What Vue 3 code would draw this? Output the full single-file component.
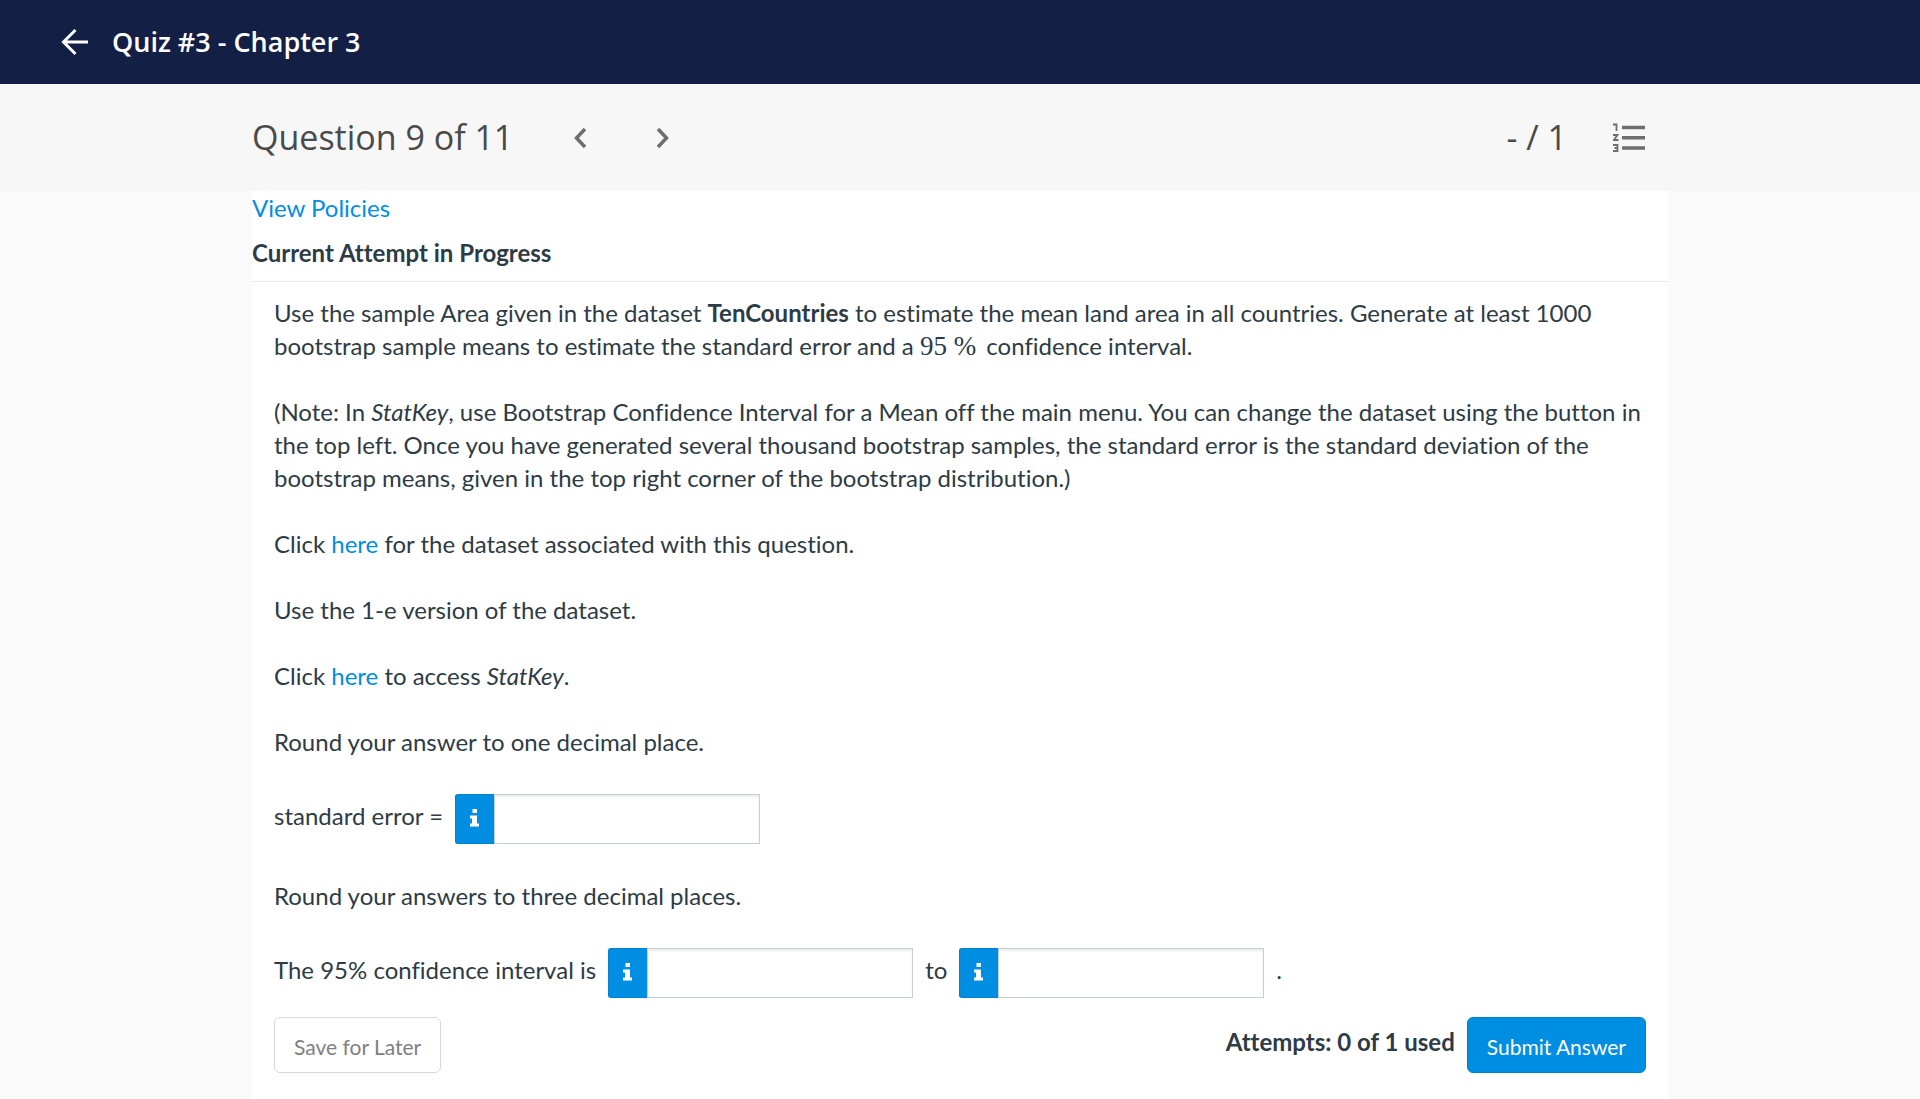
<script setup>
import { ref } from 'vue'

const standardError = ref('')
const lower = ref('')
const upper = ref('')
</script>

<template>
  <div class="page">
    <header class="topbar">
      <button class="icon-button back" type="button" aria-label="Back">
        <svg width="28" height="28" viewBox="0 0 28 28" fill="none" stroke="#fff" stroke-width="3">
          <path d="M15.500 2 L3.500 14 L15.500 26 M3.500 14 H28" />
        </svg>
      </button>
      <h1>Quiz #3 - Chapter 3</h1>
    </header>

    <nav class="toolbar">
      <div class="toolbar-inner">
        <h2>Question 9 of 11</h2>
        <button class="icon-button prev" type="button" aria-label="Previous question">
          <svg width="14" height="22" viewBox="0 0 14 22" fill="none" stroke="#6e6e6e" stroke-width="3.500">
            <path d="M12 2 L3.500 11 L12 20" />
          </svg>
        </button>
        <button class="icon-button next" type="button" aria-label="Next question">
          <svg width="14" height="22" viewBox="0 0 14 22" fill="none" stroke="#6e6e6e" stroke-width="3.500">
            <path d="M2 2 L10.500 11 L2 20" />
          </svg>
        </button>
        <span class="score">- / 1</span>
        <button class="icon-button list" type="button" aria-label="Question list">
          <svg width="32" height="29" viewBox="0 0 32 29" fill="none" stroke="#6e6e6e">
            <path stroke-width="3.600" d="M9 4.500 H32 M9 14.700 H32 M9 25 H32" />
            <path stroke-width="1.800" d="M0 1.500 H3.500 V8 M0 12 H4.500 L1 17 H5.500 M0 22 H4.500 V28 H0 M1.500 25 H4.500" />
          </svg>
        </button>
      </div>
    </nav>

    <main class="card">
      <div class="card-head">
        <a href="#">View Policies</a>
        <h3>Current Attempt in Progress</h3>
      </div>

      <div class="question">
        <p>
          Use the sample Area given in the dataset <strong>TenCountries</strong> to estimate the mean land
          area in all countries. Generate at least 1000 bootstrap sample means to estimate the standard
          error and a <span class="math">95&nbsp;%</span> confidence interval.
        </p>
        <p>
          (Note: In <em>StatKey</em>, use Bootstrap Confidence Interval for a Mean off the main menu. You can
          change the dataset using the button in the top left. Once you have generated several thousand
          bootstrap samples, the standard error is the standard deviation of the bootstrap means, given in
          the top right corner of the bootstrap distribution.)
        </p>
        <p>Click <a href="#">here</a> for the dataset associated with this question.</p>
        <p>Use the 1-e version of the dataset.</p>
        <p>Click <a href="#">here</a> to access <em>StatKey</em>.</p>
        <p>Round your answer to one decimal place.</p>

        <div class="answer">
          <label for="se">standard error =</label>
          <div class="field">
            <button class="info" type="button" aria-label="Answer information">
              <svg width="10" height="18" viewBox="0 0 10 18" fill="#fff">
                <path d="M2.500 0 H7 V4 H2.500 Z M0 6.500 H7 V14.500 H9 V17.500 H0 V14.500 H2 V9.500 H0 Z" />
              </svg>
            </button>
            <input id="se" v-model="standardError" type="text" />
          </div>
        </div>

        <p>Round your answers to three decimal places.</p>

        <div class="answer">
          <label for="lower">The 95% confidence interval is</label>
          <div class="field">
            <button class="info" type="button" aria-label="Answer information">
              <svg width="10" height="18" viewBox="0 0 10 18" fill="#fff">
                <path d="M2.500 0 H7 V4 H2.500 Z M0 6.500 H7 V14.500 H9 V17.500 H0 V14.500 H2 V9.500 H0 Z" />
              </svg>
            </button>
            <input id="lower" v-model="lower" type="text" />
          </div>
          <label for="upper">to</label>
          <div class="field">
            <button class="info" type="button" aria-label="Answer information">
              <svg width="10" height="18" viewBox="0 0 10 18" fill="#fff">
                <path d="M2.500 0 H7 V4 H2.500 Z M0 6.500 H7 V14.500 H9 V17.500 H0 V14.500 H2 V9.500 H0 Z" />
              </svg>
            </button>
            <input id="upper" v-model="upper" type="text" />
          </div>
          <span>.</span>
        </div>
      </div>

      <footer class="actions">
        <button class="btn save" type="button">Save for Later</button>
        <div class="submit-group">
          <span class="attempts">Attempts: 0 of 1 used</span>
          <button class="btn submit" type="button">Submit Answer</button>
        </div>
      </footer>
    </main>
  </div>
</template>

<style>
body {
  margin: 0;
  background: #fafafa;
}
</style>

<style scoped>
* {
  box-sizing: border-box;
}

.page {
  display: flex;
  flex-direction: column;
  min-height: 100vh;
  color: #2d3b45;
  font-family: Lato, sans-serif;
  font-size: 24px;
  font-variant-ligatures: no-common-ligatures;
  line-height: 33px;
}

h1,
h2,
h3,
p {
  margin: 0;
}

a {
  color: #008ee2;
  text-decoration: none;
}

.icon-button {
  display: flex;
  padding: 0;
  border: 0;
  background: none;
  cursor: pointer;
}

.topbar {
  display: flex;
  align-items: center;
  gap: 24px;
  height: 84px;
  padding: 0 60px;
  background: #131f44;
}

.topbar h1 {
  padding-bottom: 2px;
  color: #fff;
  font-family: "Open Sans", sans-serif;
  font-size: 27px;
  font-weight: 600;
}

.toolbar {
  background: #f7f7f7;
}

.toolbar-inner {
  display: flex;
  align-items: center;
  width: 100%;
  max-width: 1416px;
  height: 107px;
  margin: 0 auto;
  padding-right: 23px;
  color: #4a4a4a;
  font-family: "Open Sans", sans-serif;
}

.toolbar h2,
.score {
  font-size: 34px;
  font-weight: 400;
  white-space: nowrap;
}

.prev {
  margin-left: 60px;
}

.next {
  margin-left: 69px;
}

.score {
  margin-left: auto;
}

.list {
  margin-left: 46px;
}

.card {
  flex: 1;
  width: 100%;
  max-width: 1416px;
  margin: 0 auto;
  background: #fff;
}

.card-head {
  height: 91px;
  border-bottom: 1px solid #ebebeb;
}

.card-head h3 {
  margin-top: 12px;
  font-size: 24px;
  font-weight: 700;
}

.question {
  padding: 14px 22px 0;
}

.question p {
  margin-bottom: 33px;
}

.math {
  margin-right: 4px;
  font-family: "Liberation Serif", serif;
  font-size: 27px;
  line-height: 1;
}

.answer {
  display: flex;
  gap: 12px;
  margin-bottom: 35px;
  padding-top: 3px;
}

.answer > label,
.answer > span {
  margin-top: 5px;
}

.field {
  display: flex;
  width: 305px;
  height: 50px;
}

.info {
  display: flex;
  flex: none;
  align-items: center;
  justify-content: center;
  width: 39px;
  padding: 0 0 2px;
  border: 1px solid #0081cf;
  border-right: 0;
  border-radius: 3px 0 0 3px;
  background: #008ee2;
}

.field input {
  flex: 1;
  min-width: 0;
  padding: 0 12px;
  border: 1px solid #c7cdd1;
  border-radius: 0;
  box-shadow: inset 0 2px 2px rgba(0, 0, 0, 0.08);
  color: inherit;
  font: inherit;
}

.actions {
  display: flex;
  justify-content: space-between;
  margin-top: -16px;
  padding: 0 22px 26px;
}

.submit-group {
  display: flex;
  gap: 12px;
}

.attempts {
  margin-top: 8px;
  font-weight: 700;
}

.btn {
  height: 56px;
  padding: 2px 19px 0;
  border-radius: 6px;
  font-family: inherit;
  font-size: 21px;
  cursor: pointer;
}

.save {
  border: 1px solid #d8d8d8;
  background: #fff;
  color: #808080;
}

.submit {
  border: 1px solid #0081cf;
  background: #008ee2;
  color: #fff;
}
</style>
